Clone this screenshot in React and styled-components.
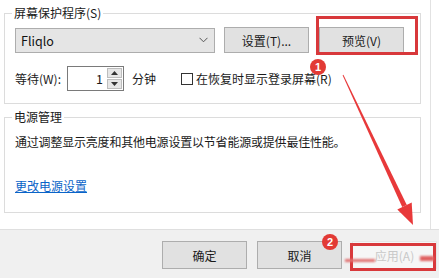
import React from 'react';
import styled, { createGlobalStyle } from 'styled-components';

const GlobalStyle = createGlobalStyle`
  html, body {
    margin: 0;
    padding: 0;
    background: #ffffff;
  }
  body {
    font-family: 'Noto Sans CJK SC', 'Noto Sans', sans-serif;
    font-size: 12px;
    color: #1a1a1a;
  }
`;

const Page = styled.div`
  position: relative;
  width: 439px;
  height: 278px;
  overflow: hidden;
  display: flex;
  flex-direction: column;
`;

const Main = styled.div`
  width: 418px;
  height: 229px;
  box-sizing: border-box;
  padding: 5px 0 0 4px;
  margin-right: 8px;
  border-right: 1px solid #e2e2e2;
  width: 431px;
  padding-right: 9px;
  display: flex;
  flex-direction: column;
  gap: 5px;
`;

const Group = styled.fieldset`
  margin: 0;
  padding: 0 10px ${({ $bottom }) => $bottom}px 10px;
  border: 1px solid #dcdcdc;
  min-width: 0;
`;

const Legend = styled.legend`
  margin-left: -3px;
  padding: 0 2px;
  line-height: 16px;
  font-size: 12px;
  color: #1a1a1a;
`;

const Row = styled.div`
  display: flex;
  align-items: center;
  margin-top: ${({ $top }) => $top}px;
`;

const Select = styled.div`
  width: 200px;
  height: 25px;
  box-sizing: border-box;
  background: #e5e5e5;
  border: 1px solid #adadad;
  display: flex;
  align-items: center;
  justify-content: space-between;
  padding: 0 6px 0 5px;
  font-size: 12.5px;
  color: #111;
`;

const Button = styled.div`
  width: ${({ $w }) => $w || 85}px;
  height: ${({ $h }) => $h || 26}px;
  box-sizing: border-box;
  background: ${({ $faded }) => ($faded ? '#f6f6f6' : '#e1e1e1')};
  border: 1px solid ${({ $faded }) => ($faded ? '#e6e6e6' : '#adadad')};
  display: flex;
  align-items: center;
  justify-content: center;
  font-size: 12px;
  color: ${({ $faded }) => ($faded ? '#c8c8c8' : '#1a1a1a')};
  margin-left: ${({ $ml }) => $ml || 0}px;
`;

const Label = styled.span`
  margin-left: ${({ $ml }) => $ml || 0}px;
  line-height: 16px;
`;

const Spinner = styled.div`
  margin-left: 6px;
  width: 57px;
  height: 25px;
  box-sizing: border-box;
  border: 1px solid #7a7a7a;
  display: flex;
  background: #fff;
`;

const SpinValue = styled.div`
  flex: 1;
  display: flex;
  align-items: center;
  justify-content: flex-end;
  padding-right: 4px;
  font-size: 12.5px;
`;

const SpinButtons = styled.div`
  width: 15px;
  display: flex;
  flex-direction: column;
  gap: 1px;
  padding: 1px 1px 1px 0;
`;

const SpinPart = styled.div`
  flex: 1;
  background: #e6e6e6;
  border: 1px solid #bdbdbd;
  display: flex;
  align-items: center;
  justify-content: center;
`;

const Check = styled.span`
  margin-left: 25px;
  width: 12px;
  height: 12px;
  box-sizing: border-box;
  border: 1px solid #333;
  background: #fff;
  margin-right: 3px;
`;

const Desc = styled.div`
  margin-top: 9px;
  line-height: 16px;
  font-size: 12px;
  letter-spacing: -0.2px;
`;

const Link = styled.a`
  display: inline-block;
  margin-top: 28px;
  line-height: 16px;
  color: #0a64c8;
  text-decoration: underline;
  font-size: 12px;
`;

const Footer = styled.div`
  flex: 1;
  background: #f0f0f0;
  border-top: 1px solid #dfdfdf;
  display: flex;
  justify-content: flex-end;
  align-items: flex-start;
  padding: 11px 2px 0 0;
  gap: 10px;
`;

const RedBox = styled.div`
  position: absolute;
  left: ${({ $x }) => $x}px;
  top: ${({ $y }) => $y}px;
  width: ${({ $w }) => $w}px;
  height: ${({ $h }) => $h}px;
  box-sizing: border-box;
  border: 3px solid #d8383b;
`;

const Badge = styled.div`
  position: absolute;
  left: ${({ $x }) => $x - 8}px;
  top: ${({ $y }) => $y - 8}px;
  width: 16px;
  height: 16px;
  border-radius: 50%;
  background: #e23a35;
  color: #fff;
  font-family: 'Liberation Sans', Arial, sans-serif;
  font-size: 11px;
  font-weight: bold;
  display: flex;
  align-items: center;
  justify-content: center;
`;

const Overlay = styled.svg`
  position: absolute;
  left: 0;
  top: 0;
  pointer-events: none;
`;

const Smudge = styled.div`
  position: absolute;
  left: ${({ $x }) => $x}px;
  top: ${({ $y }) => $y}px;
  width: ${({ $w }) => $w}px;
  height: ${({ $h }) => $h}px;
  background: ${({ $c }) => $c};
  filter: blur(1px);
`;

const Chevron = () => (
  <svg width="9" height="6" viewBox="0 0 9 6">
    <polyline points="0.5,0.8 4.5,4.8 8.5,0.8" fill="none" stroke="#555" strokeWidth="1" />
  </svg>
);

const Tri = ({ up }) => (
  <svg width="7" height="4" viewBox="0 0 7 4">
    <polygon points={up ? '0,4 7,4 3.5,0' : '0,0 7,0 3.5,4'} fill="#333" />
  </svg>
);

export default function App() {
  return (
    <Page>
      <GlobalStyle />
      <Main>
        <Group $bottom={12}>
          <Legend>屏幕保护程序(S)</Legend>
          <Row $top={6}>
            <Select>
              <span>Fliqlo</span>
              <Chevron />
            </Select>
            <Button $ml={9}>设置(T)...</Button>
            <Button $ml={10}>预览(V)</Button>
          </Row>
          <Row $top={13}>
            <Label>等待(W):</Label>
            <Spinner>
              <SpinValue>1</SpinValue>
              <SpinButtons>
                <SpinPart><Tri up /></SpinPart>
                <SpinPart><Tri /></SpinPart>
              </SpinButtons>
            </Spinner>
            <Label $ml={8}>分钟</Label>
            <Check />
            <Label>在恢复时显示登录屏幕(R)</Label>
          </Row>
        </Group>
        <Group $bottom={18}>
          <Legend>电源管理</Legend>
          <Desc>通过调整显示亮度和其他电源设置以节省能源或提供最佳性能。</Desc>
          <Link>更改电源设置</Link>
        </Group>
      </Main>
      <Footer>
        <Button $h={28}>确定</Button>
        <Button $h={28}>取消</Button>
        <Button $h={28} $faded>应用(A)</Button>
      </Footer>

      <RedBox $x={316} $y={16} $w={102} $h={39} />
      <RedBox $x={350} $y={243} $w={86} $h={28} />
      <Smudge $x={345} $y={259} $w={30} $h={3} $c="#e07070" />
      <Smudge $x={420} $y={256} $w={14} $h={5} $c="#e06060" />
      <Overlay width="439" height="278" viewBox="0 0 439 278">
        <polygon
          points="343.4,74.8 342.6,75.2 402.2,207.1 406.8,204.9"
          fill="#e8393a"
        />
        <polygon points="413,225 397.3,209.4 411.7,202.6" fill="#e8393a" />
      </Overlay>
      <Badge $x={318} $y={67}>1</Badge>
      <Badge $x={330} $y={242}>2</Badge>
    </Page>
  );
}
